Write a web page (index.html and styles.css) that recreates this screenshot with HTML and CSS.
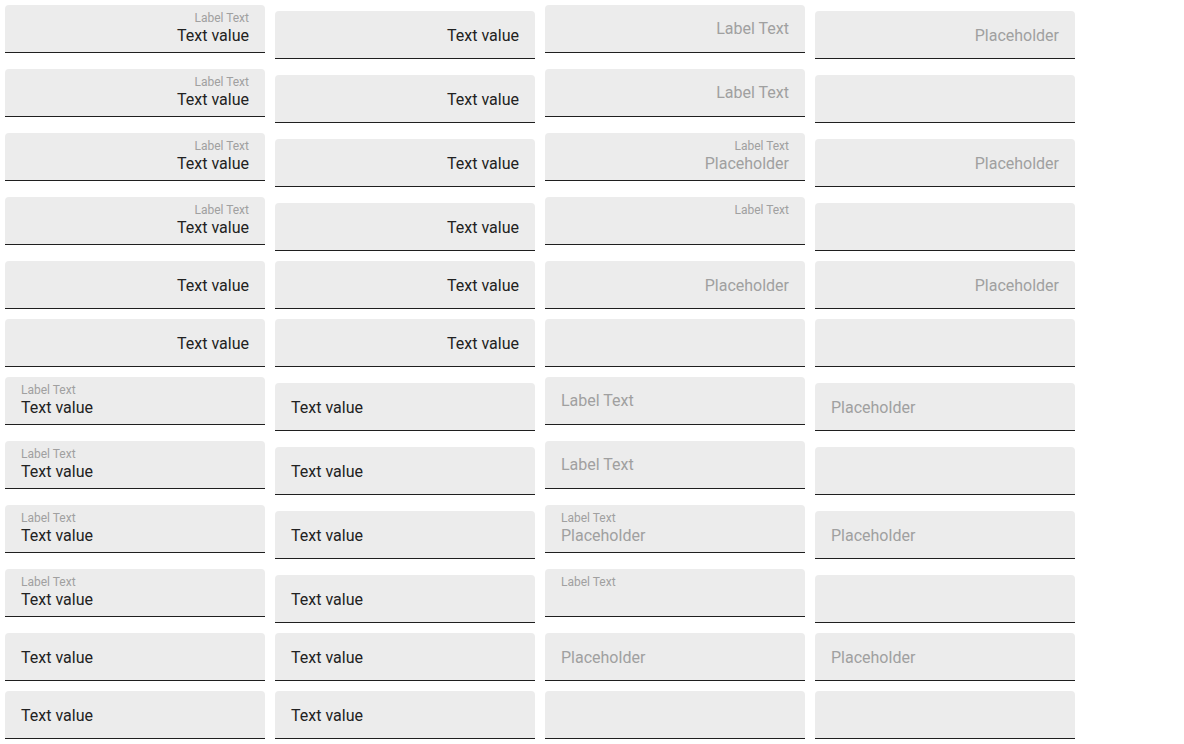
FILE: index.html
```html
<!DOCTYPE html>
<html lang="en">
<head>
<meta charset="utf-8">
<title>Text fields</title>
<link rel="stylesheet" href="styles.css">
</head>
<body>
<div class="board">
  <div class="row right">
    <div class="field two"><span class="label">Label Text</span><span class="value">Text value</span></div>
    <div class="field one shift"><span class="value">Text value</span></div>
    <div class="field rest"><span class="hint">Label Text</span></div>
    <div class="field one shift"><span class="hint">Placeholder</span></div>
  </div>
  <div class="row right">
    <div class="field two"><span class="label">Label Text</span><span class="value">Text value</span></div>
    <div class="field one shift"><span class="value">Text value</span></div>
    <div class="field rest"><span class="hint">Label Text</span></div>
    <div class="field shift"></div>
  </div>
  <div class="row right">
    <div class="field two"><span class="label">Label Text</span><span class="value">Text value</span></div>
    <div class="field one shift"><span class="value">Text value</span></div>
    <div class="field two"><span class="label">Label Text</span><span class="hint">Placeholder</span></div>
    <div class="field one shift"><span class="hint">Placeholder</span></div>
  </div>
  <div class="row right">
    <div class="field two"><span class="label">Label Text</span><span class="value">Text value</span></div>
    <div class="field one shift"><span class="value">Text value</span></div>
    <div class="field two"><span class="label">Label Text</span></div>
    <div class="field shift"></div>
  </div>
  <div class="row right">
    <div class="field one"><span class="value">Text value</span></div>
    <div class="field one"><span class="value">Text value</span></div>
    <div class="field one"><span class="hint">Placeholder</span></div>
    <div class="field one"><span class="hint">Placeholder</span></div>
  </div>
  <div class="row right">
    <div class="field one"><span class="value">Text value</span></div>
    <div class="field one"><span class="value">Text value</span></div>
    <div class="field"></div>
    <div class="field"></div>
  </div>

  <div class="row">
    <div class="field two"><span class="label">Label Text</span><span class="value">Text value</span></div>
    <div class="field one shift"><span class="value">Text value</span></div>
    <div class="field rest"><span class="hint">Label Text</span></div>
    <div class="field one shift"><span class="hint">Placeholder</span></div>
  </div>
  <div class="row">
    <div class="field two"><span class="label">Label Text</span><span class="value">Text value</span></div>
    <div class="field one shift"><span class="value">Text value</span></div>
    <div class="field rest"><span class="hint">Label Text</span></div>
    <div class="field shift"></div>
  </div>
  <div class="row">
    <div class="field two"><span class="label">Label Text</span><span class="value">Text value</span></div>
    <div class="field one shift"><span class="value">Text value</span></div>
    <div class="field two"><span class="label">Label Text</span><span class="hint">Placeholder</span></div>
    <div class="field one shift"><span class="hint">Placeholder</span></div>
  </div>
  <div class="row">
    <div class="field two"><span class="label">Label Text</span><span class="value">Text value</span></div>
    <div class="field one shift"><span class="value">Text value</span></div>
    <div class="field two"><span class="label">Label Text</span></div>
    <div class="field shift"></div>
  </div>
  <div class="row">
    <div class="field one"><span class="value">Text value</span></div>
    <div class="field one"><span class="value">Text value</span></div>
    <div class="field one"><span class="hint">Placeholder</span></div>
    <div class="field one"><span class="hint">Placeholder</span></div>
  </div>
  <div class="row">
    <div class="field one"><span class="value">Text value</span></div>
    <div class="field one"><span class="value">Text value</span></div>
    <div class="field"></div>
    <div class="field"></div>
  </div>
</div>
</body>
</html>
```

FILE: styles.css
```css
html, body {
  margin: 0;
  padding: 0;
  background: #ffffff;
}

body {
  font-family: Roboto, "Liberation Sans", Arial, sans-serif;
  color: #212121;
}

.board {
  display: flex;
  flex-direction: column;
  gap: 10px;
  padding: 5px;
}

.row {
  display: flex;
  align-items: flex-start;
  gap: 10px;
}

.field {
  box-sizing: border-box;
  width: 260px;
  height: 48px;
  background: #ececec;
  border-bottom: 1px solid #1f1f1f;
  border-radius: 4px 4px 0 0;
  padding: 0 16px;
  display: flex;
  flex-direction: column;
  align-items: flex-start;
}

.right .field {
  align-items: flex-end;
}

.shift {
  margin-top: 6px;
}

.two {
  padding-top: 4.5px;
}

.one {
  padding-top: 14.5px;
}

.rest {
  padding-top: 13.5px;
}

.label {
  font-size: 12px;
  line-height: 16px;
  color: #a0a0a0;
}

.value,
.hint {
  font-size: 16px;
  line-height: 20px;
  white-space: nowrap;
}

.value {
  color: #222222;
}

.hint {
  color: #a0a0a0;
}
```
